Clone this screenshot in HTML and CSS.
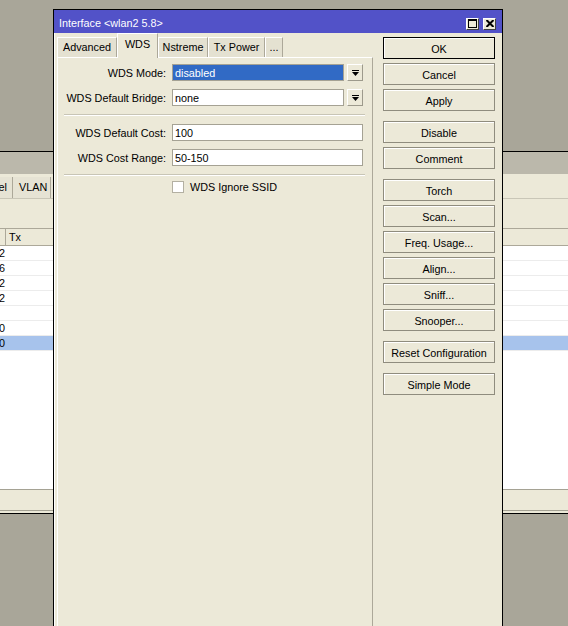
FILE: index.html
```html
<!DOCTYPE html>
<html>
<head>
<meta charset="utf-8">
<title>Interface wlan2 5.8</title>
<link rel="stylesheet" href="styles.css">
</head>
<body>
<div class="desktop">
  <div class="bgwin">
    <div class="bg-title"></div>
    <div class="bg-tabs">
      <div class="bg-tab first"><span>GRE Tunnel</span></div>
      <div class="bg-tab vlan">VLAN</div>
      <div class="bg-tab">VRRP</div>
      <div class="bg-tab">Bonding</div>
    </div>
    <div class="bg-toolbar"></div>
    <div class="grid">
      <div class="ghead"><div class="c1"></div><div class="c2">Tx</div></div>
      <div class="gbody">
        <div class="grow"><div class="c1">2</div></div>
        <div class="grow"><div class="c1">6</div></div>
        <div class="grow"><div class="c1">2</div></div>
        <div class="grow"><div class="c1">2</div></div>
        <div class="grow"><div class="c1"></div></div>
        <div class="grow"><div class="c1">0</div></div>
        <div class="grow sel"><div class="c1">0</div></div>
      </div>
    </div>
    <div class="status"></div>
  </div>

  <div class="dialog">
    <div class="titlebar">
      <div class="title-text">Interface &lt;wlan2 5.8&gt;</div>
      <div class="tbtn">
        <svg width="9" height="9" viewBox="0 0 9 9"><rect x="0.5" y="0.5" width="8" height="8" fill="none" stroke="#000"/><rect x="0" y="0" width="9" height="2" fill="#000"/></svg>
      </div>
      <div class="tbtn">
        <svg width="8" height="7" viewBox="0 0 8 7"><path d="M0.5 0 L7.5 7 M7.5 0 L0.5 7" stroke="#000" stroke-width="2" fill="none"/></svg>
      </div>
    </div>
    <div class="dbody">
      <div class="leftcol">
        <div class="tabs">
          <div class="tab w-adv">Advanced</div>
          <div class="tab active w-wds">WDS</div>
          <div class="tab w-nst">Nstreme</div>
          <div class="tab w-txp">Tx Power</div>
          <div class="tab w-more">...</div>
        </div>
        <div class="panel">
          <div class="frow">
            <div class="flabel">WDS Mode:</div>
            <div class="field">
              <div class="input sel">disabled</div>
              <div class="ddbtn"><svg width="7" height="6" viewBox="0 0 7 6"><rect x="0" y="0" width="7" height="1" fill="#000"/><path d="M0 2 L7 2 L3.5 6 Z" fill="#000"/></svg></div>
            </div>
          </div>
          <div class="frow">
            <div class="flabel">WDS Default Bridge:</div>
            <div class="field">
              <div class="input">none</div>
              <div class="ddbtn"><svg width="7" height="6" viewBox="0 0 7 6"><rect x="0" y="0" width="7" height="1" fill="#000"/><path d="M0 2 L7 2 L3.5 6 Z" fill="#000"/></svg></div>
            </div>
          </div>
          <div class="sep s1"></div>
          <div class="frow">
            <div class="flabel">WDS Default Cost:</div>
            <div class="field"><div class="input">100</div></div>
          </div>
          <div class="frow">
            <div class="flabel">WDS Cost Range:</div>
            <div class="field"><div class="input">50-150</div></div>
          </div>
          <div class="sep s2"></div>
          <div class="crow">
            <div class="check"></div>
            <div class="clabel">WDS Ignore SSID</div>
          </div>
        </div>
      </div>
      <div class="rcol">
        <div class="btn ok">OK</div>
        <div class="btn">Cancel</div>
        <div class="btn">Apply</div>
        <div class="btn gap">Disable</div>
        <div class="btn">Comment</div>
        <div class="btn gap">Torch</div>
        <div class="btn">Scan...</div>
        <div class="btn">Freq. Usage...</div>
        <div class="btn">Align...</div>
        <div class="btn">Sniff...</div>
        <div class="btn">Snooper...</div>
        <div class="btn gap">Reset Configuration</div>
        <div class="btn gap">Simple Mode</div>
      </div>
    </div>
  </div>
</div>
</body>
</html>
```
FILE: styles.css
```css
* { box-sizing: border-box; }
html, body { margin: 0; padding: 0; }
body {
  font-family: "Liberation Sans", Arial, sans-serif;
  font-size: 10.8px;
  color: #000;
  background: #a9a699;
}
.desktop {
  position: relative;
  width: 568px;
  height: 626px;
  overflow: hidden;
  background: #a9a699;
}

/* background window */
.bgwin {
  position: absolute;
  left: -60px;
  top: 151px;
  width: 720px;
  height: 363px;
  border: 1px solid #000;
  background: #ece9d8;
  display: flex;
  flex-direction: column;
}
.bg-title { height: 22px; background: #bbb8ab; }
.bg-tabs {
  margin-top: 3px;
  height: 22px;
  display: flex;
  padding-left: 9px;
  border-bottom: 1px solid #c9c6b7;
}
.bg-tab {
  height: 21px;
  line-height: 21px;
  padding: 0 5px;
  white-space: nowrap;
  background: #e6e3d4;
  border-right: 1px solid #aca899;
}
.bg-tab.first {
  width: 63px;
  display: flex;
  justify-content: flex-end;
  overflow: hidden;
}
.bg-tab.first span { flex: none; }
.bg-tab.vlan { width: 38px; padding: 0 0 0 6px; }
.bg-toolbar { height: 29px; }
.grid { flex: 1; display: flex; flex-direction: column; }
.ghead {
  height: 18px;
  display: flex;
  border-top: 1px solid #aca899;
  border-bottom: 1px solid #aca899;
  line-height: 16px;
  background: #ece9d8;
}
.gbody { flex: 1; background: #fff; }
.grow {
  height: 15px;
  display: flex;
  line-height: 15px;
  border-bottom: 1px solid #ececec;
}
.grow.sel { background: #a7c3ec; }
.c1 { width: 65px; text-align: right; padding-right: 1px; }
.ghead .c1 { border-right: 1px solid #aca899; }
.c2 { padding-left: 3px; }
.status {
  height: 22px;
  border-top: 1px solid #a5a294;
  border-bottom: 1px solid #a5a294;
  margin-bottom: 2px;
}

/* dialog */
.dialog {
  position: absolute;
  left: 53px;
  top: 9px;
  width: 450px;
  height: 640px;
  border: 1px solid #000;
  background: #ece9d8;
  box-shadow: inset 1px 0 0 #fff;
  display: flex;
  flex-direction: column;
}
.titlebar {
  height: 23px;
  background: #5252c8;
  color: #fff;
  display: flex;
  align-items: center;
  padding: 0 6px 0 5px;
}
.title-text { flex: 1; padding-top: 2px; white-space: nowrap; }
.tbtn {
  width: 13px;
  height: 12px;
  margin-left: 4px;
  margin-top: 4px;
  background: #ece9d8;
  border: 1px solid;
  border-color: #fff #404040 #404040 #fff;
  display: flex;
  align-items: center;
  justify-content: center;
}
.dbody {
  flex: 1;
  display: flex;
  gap: 10px;
  padding: 0 6px 0 3px;
  min-height: 0;
}
.leftcol { width: 316px; display: flex; flex-direction: column; }
.tabs { height: 24px; display: flex; align-items: flex-end; }
.tab {
  height: 20px;
  line-height: 18px;
  text-align: center;
  white-space: nowrap;
  background: #e4e1d1;
  border-top: 1px solid #fff;
  border-left: 1px solid #fff;
  border-right: 1px solid #aca899;
}
.tab.active {
  height: 25px;
  line-height: 20px;
  margin-bottom: -1px;
  background: #ece9d8;
  position: relative;
  z-index: 1;
}
.w-adv { width: 60px; }
.w-wds { width: 41px; }
.w-nst { width: 50px; }
.w-txp { width: 57px; }
.w-more { width: 18px; }
.panel {
  flex: 1;
  border-top: 1px solid #fff;
  border-left: 1px solid #fff;
  border-right: 1px solid #aca899;
  padding-top: 6px;
}
.frow {
  display: flex;
  align-items: center;
  height: 17px;
  margin-bottom: 8px;
}
.flabel {
  width: 108px;
  margin-right: 6px;
  padding-top: 1px;
  text-align: right;
  white-space: nowrap;
}
.field { width: 191px; display: flex; gap: 3px; }
.input {
  flex: 1;
  height: 17px;
  line-height: 15px;
  padding: 1px 0 0 2px;
  background: #fff;
  border: 1px solid #a5a294;
  white-space: nowrap;
}
.input.sel { background: #316ac5; color: #fff; }
.ddbtn {
  width: 16px;
  height: 17px;
  background: #ece9d8;
  border: 1px solid;
  border-color: #fff #9d9a8c #9d9a8c #fff;
  display: flex;
  align-items: center;
  justify-content: center;
}
.sep {
  height: 2px;
  border-top: 1px solid #c8c5b6;
  border-bottom: 1px solid #fff;
  margin-left: 6px;
  margin-right: 7px;
}
.sep.s1 { margin-top: 2px; margin-bottom: 8px; }
.sep.s2 { margin-top: 1px; margin-bottom: 5px; }
.crow { display: flex; align-items: center; height: 12px; padding-left: 114px; }
.check {
  width: 12px;
  height: 12px;
  background: #fff;
  border: 1px solid #b3b0a2;
}
.clabel { margin-left: 6px; white-space: nowrap; }

.rcol {
  width: 112px;
  padding-top: 4px;
  display: flex;
  flex-direction: column;
}
.btn {
  height: 22px;
  margin-bottom: 4px;
  padding-top: 1px;
  line-height: 20px;
  text-align: center;
  white-space: nowrap;
  background: #ece9d8;
  border: 1px solid #8f8c7e;
  box-shadow: inset 1px 1px 0 #fff;
}
.btn.ok { border-color: #000; }
.btn.gap { margin-top: 6px; }
```
